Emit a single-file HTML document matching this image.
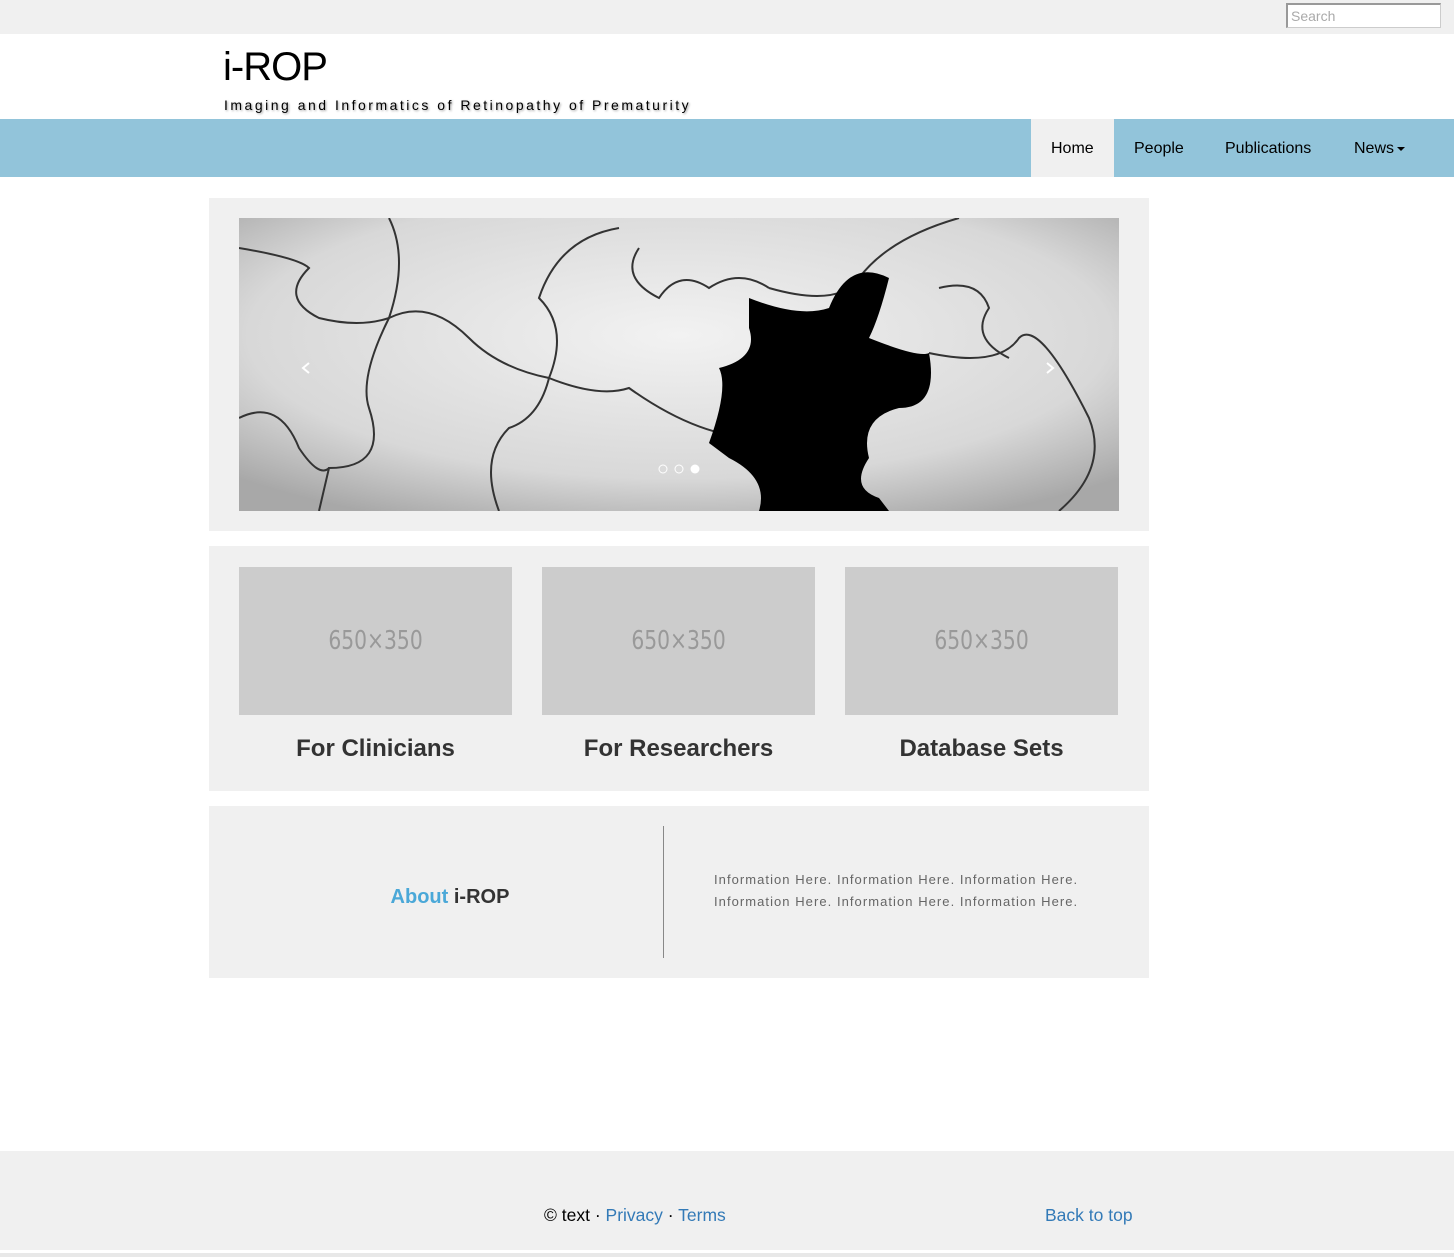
<!DOCTYPE html>
<html><head><style>
*{margin:0;padding:0;box-sizing:border-box}
body{width:1454px;height:1257px;background:#fff;font-family:"Liberation Sans",sans-serif;position:relative;overflow:hidden}
.abs{position:absolute}
.ph{background:#ccc;color:#999;font-size:26px;text-align:center;line-height:148px;font-family:'DejaVu Sans','Liberation Sans',sans-serif;width:273px;height:148px}
.ph span{display:inline-block;transform:scaleX(0.78)}
</style></head><body>
<div class="abs" style="left:0;top:0;width:1454px;height:34px;background:#f0f0f0"></div>
<div class="abs" style="left:1286px;top:3px;width:155px;height:25px;background:#fff;border:1px solid #ccc;border-top:2px solid #999;border-left:2px solid #999;font-size:14px;color:#aaa;padding:3px 3px">Search</div>
<div class="abs" style="left:223px;top:45px;font-size:40px;color:#000;letter-spacing:-1px">i-ROP</div>
<div class="abs" style="left:224px;top:97px;font-size:14px;color:#000;letter-spacing:2.5px;text-shadow:1px 1px 2px #999">Imaging and Informatics of Retinopathy of Prematurity</div>
<div class="abs" style="left:0;top:119px;width:1454px;height:58px;background:#92c4da"></div>
<div class="abs" style="left:1031px;top:119px;width:83px;height:58px;background:#f0f0f0"></div>
<div class="abs" style="top:140px;left:1051px;font-size:16px;color:#000">Home</div>
<div class="abs" style="top:140px;left:1134px;font-size:16px;color:#000">People</div>
<div class="abs" style="top:140px;left:1225px;font-size:16px;color:#000">Publications</div>
<div class="abs" style="top:140px;left:1354px;font-size:16px;color:#000">News<span style="display:inline-block;width:0;height:0;border-left:4px solid transparent;border-right:4px solid transparent;border-top:4px solid #000;margin-left:3px;vertical-align:middle"></span></div>

<div class="abs" style="left:209px;top:198px;width:940px;height:333px;background:#f0f0f0"></div>
<svg class="abs" style="left:239px;top:218px" width="880" height="293" viewBox="0 0 880 293">
<defs><radialGradient id="g" cx="0.5" cy="0.4" r="0.7"><stop offset="0" stop-color="#f2f2f2"/><stop offset="0.7" stop-color="#d8d8d8"/><stop offset="1" stop-color="#a8a8a8"/></radialGradient></defs>
<rect width="880" height="293" fill="url(#g)"/>
<g fill="none" stroke="#333" stroke-width="2">
<path d="M0 30 Q60 40 70 50 Q40 80 80 100 Q120 110 150 100 Q190 80 230 120 Q260 150 310 160 Q360 180 390 170 Q460 220 520 220"/>
<path d="M150 100 Q170 40 150 0 M150 100 Q120 160 130 190 Q150 250 90 250 L80 293"/>
<path d="M310 160 Q330 110 300 80 Q320 20 380 10 M310 160 Q300 200 270 210 Q240 240 260 293"/>
<path d="M530 70 Q600 90 620 60 Q650 20 720 0 M690 135 Q760 150 780 120 Q800 100 850 200 Q870 250 820 293"/>
<path d="M0 200 Q40 180 60 230 Q80 260 90 250 M400 30 Q380 60 420 80 Q440 50 470 70 Q500 50 530 70"/>
<path d="M700 70 Q740 60 750 90 Q730 120 770 140"/>
</g>
<path d="M510 80 Q560 100 590 90 Q610 40 650 60 Q640 100 630 120 Q680 140 690 135 Q700 190 660 190 Q620 200 630 240 Q610 270 640 280 L650 293 L520 293 Q530 260 490 240 Q470 225 470 225 Q490 170 480 150 Q520 140 510 110 Z" fill="#000"/>
<circle cx="424" cy="251" r="4" fill="none" stroke="#fff"/><circle cx="440" cy="251" r="4" fill="none" stroke="#fff"/><circle cx="456" cy="251" r="4.5" fill="#fff"/>
<path d="M70 145 L64 150 L70 155 M808 145 L814 150 L808 155" stroke="#fff" stroke-width="2" fill="none"/>
</svg>

<div class="abs" style="left:209px;top:546px;width:940px;height:245px;background:#f0f0f0"></div>
<div class="abs ph" style="left:239px;top:567px"><span>650×350</span></div>
<div class="abs ph" style="left:542px;top:567px"><span>650×350</span></div>
<div class="abs ph" style="left:845px;top:567px"><span>650×350</span></div>
<div class="abs" style="left:239px;top:735px;width:273px;text-align:center;font-size:24px;font-weight:bold;color:#333">For Clinicians</div>
<div class="abs" style="left:542px;top:735px;width:273px;text-align:center;font-size:24px;font-weight:bold;color:#333">For Researchers</div>
<div class="abs" style="left:845px;top:735px;width:273px;text-align:center;font-size:24px;font-weight:bold;color:#333">Database Sets</div>

<div class="abs" style="left:209px;top:806px;width:940px;height:172px;background:#f0f0f0"></div>
<div class="abs" style="left:663px;top:826px;width:1px;height:132px;background:#888"></div>
<div class="abs" style="left:209px;top:886px;width:482px;text-align:center;font-size:20px;font-weight:bold;color:#333"><span style="color:#4aa8d8">About</span> i-ROP</div>
<div class="abs" style="left:714px;top:869px;font-size:13px;color:#666;line-height:22px;letter-spacing:1.05px">Information Here. Information Here. Information Here.<br>Information Here. Information Here. Information Here.</div>

<div class="abs" style="left:0;top:1151px;width:1454px;height:99px;background:#f0f0f0"></div>
<div class="abs" style="left:0;top:1253px;width:1454px;height:4px;background:#e8e8e8"></div>
<div class="abs" style="left:544px;top:1205px;font-size:17.5px;color:#000">© text · <span style="color:#337ab7">Privacy</span> · <span style="color:#337ab7">Terms</span></div>
<div class="abs" style="left:1045px;top:1205px;font-size:17.5px;color:#337ab7">Back to top</div>
</body></html>
